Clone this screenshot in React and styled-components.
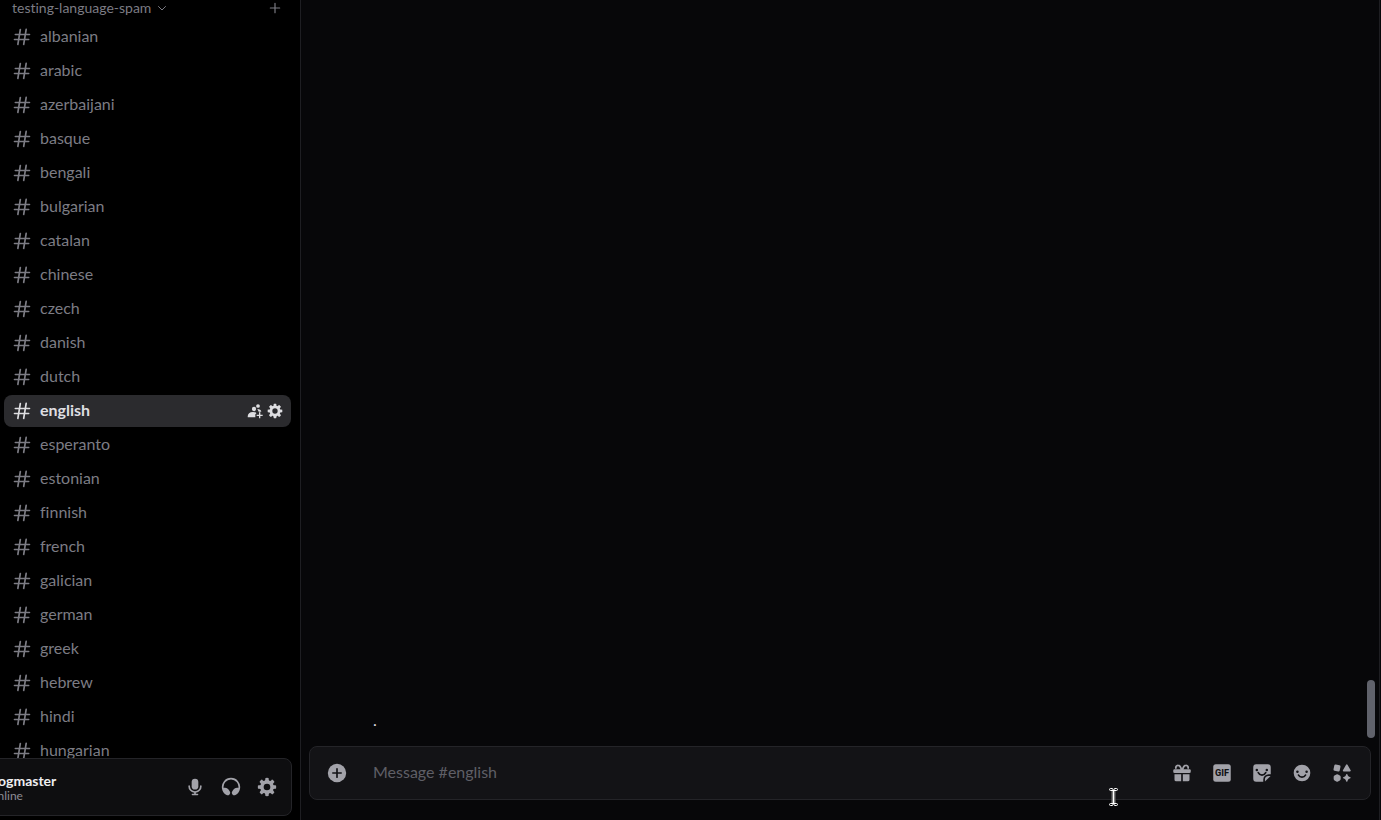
import React from "react"
import styled, { createGlobalStyle } from "styled-components"

const GlobalStyle = createGlobalStyle`
  * {
    box-sizing: border-box;
  }
  body {
    margin: 0;
    overflow: hidden;
    background: #070709;
    font-family: Lato, sans-serif;
    font-variant-ligatures: none;
  }
  button {
    display: flex;
    align-items: center;
    justify-content: center;
    padding: 0;
    border: 0;
    background: none;
    color: inherit;
    font: inherit;
  }
`

const Layout = styled.div`
  display: flex;
  height: 100vh;
  overflow: hidden;
`

const Sidebar = styled.nav`
  display: flex;
  flex-direction: column;
  flex: none;
  width: 301px;
  overflow: hidden;
  background: #000;
  border-right: 1px solid #1e1e22;
`

const Channels = styled.div`
  flex: 1;
  min-height: 0;
  overflow: hidden;
  color: #7c7c84;
`

const Category = styled.div`
  display: flex;
  align-items: center;
  justify-content: space-between;
  height: 16px;
  padding: 0 18px 0 12px;
  font-size: 14px;
  line-height: 16px;
`

const CategoryName = styled.button`
  && {
    gap: 5px;
    font-variant-ligatures: none;
  }
`

const List = styled.ul`
  display: flex;
  flex-direction: column;
  gap: 2px;
  margin: 5px 9px 0 4px;
  padding: 0;
  list-style: none;
`

const Row = styled.li`
  display: flex;
  align-items: center;
  gap: 4px;
  height: 32px;
  padding: 0 8px;
  border-radius: 8px;
  background: ${(props) => (props.$selected ? "#2b2b2e" : "none")};
  color: ${(props) => (props.$selected ? "#dedee1" : "inherit")};
`

const ChannelLink = styled.a`
  display: flex;
  flex: 1;
  align-items: center;
  gap: 8px;
  color: inherit;
  text-decoration: none;
`

const ChannelName = styled.span`
  padding-bottom: 2px;
  font-size: 16px;
  font-weight: ${(props) => (props.$selected ? 700 : 400)};
  line-height: 20px;
`

const UserPanel = styled.section`
  display: flex;
  flex: none;
  align-items: center;
  justify-content: space-between;
  height: 58px;
  margin: 0 8px 4px -64px;
  padding: 0 8px 0 51px;
  border: 1px solid #242428;
  border-radius: 8px;
  background: #0e0e10;
`

const UserText = styled.div`
  padding-top: 2px;
`

const UserName = styled.div`
  color: #efeff1;
  font-size: 14px;
  font-weight: 700;
  line-height: 16px;
`

const Status = styled.div`
  color: #8c8c94;
  font-size: 12px;
  line-height: 14px;
`

const PanelButtons = styled.div`
  display: flex;
  gap: 4px;
  color: #a2a2a9;
  button {
    width: 32px;
    height: 32px;
  }
`

const Chat = styled.main`
  display: flex;
  flex: 1;
  flex-direction: column;
  min-width: 0;
  margin-right: 1px;
  border-right: 1px solid #1e1e22;
`

const Messages = styled.div`
  display: flex;
  flex: 1;
  flex-direction: column;
  justify-content: flex-end;
  position: relative;
`

const Message = styled.p`
  margin: 0;
  padding: 0 72px 16px;
  color: #dedee1;
  font-size: 16px;
  line-height: 20px;
`

const Thumb = styled.div`
  position: absolute;
  right: 4px;
  bottom: 8px;
  width: 8px;
  height: 58px;
  border-radius: 4px;
  background: #60626b;
`

const Composer = styled.form`
  display: flex;
  flex: none;
  align-items: center;
  height: 54px;
  margin: 0 8px 20px;
  padding: 0 8px 0 7px;
  border: 1px solid #242428;
  border-radius: 8px;
  background: #131316;
  color: #a2a2a9;
  button {
    width: 40px;
    height: 40px;
  }
`

const Input = styled.input`
  flex: 1;
  min-width: 0;
  padding: 0 16px 2px;
  border: 0;
  outline: 0;
  background: none;
  color: #dedee1;
  font: 16px/20px Lato, sans-serif;
  &::placeholder {
    color: #5f5f66;
    opacity: 1;
  }
`

const Pointer = styled.svg`
  position: absolute;
  right: 260px;
  bottom: 13px;
  width: 15px;
  height: 20px;
`

const Icon = ({ size = 20, children }) => (
  <svg width={size} height={size} viewBox="0 0 24 24" fill="currentColor" aria-hidden="true">
    {children}
  </svg>
)

const HashIcon = () => (
  <Icon>
    <path
      fillRule="evenodd"
      d="M10.99 3.16A1 1 0 1 0 9 2.84L8.15 8H4a1 1 0 0 0 0 2h3.82l-.67 4H3a1 1 0 1 0 0 2h3.82l-.8 4.84a1 1 0 0 0 1.97.32L8.85 16h4.97l-.8 4.84a1 1 0 0 0 1.97.32l.86-5.16H20a1 1 0 1 0 0-2h-3.82l.67-4H21a1 1 0 1 0 0-2h-3.82l.8-4.84a1 1 0 1 0-1.97-.32L15.15 8h-4.97l.8-4.84ZM14.15 14l.67-4H9.85l-.67 4h4.97Z"
    />
  </Icon>
)

const GearIcon = ({ size }) => (
  <Icon size={size}>
    <path
      fillRule="evenodd"
      d="M10.56 1.1c-.46.05-.7.53-.64.98.18 1.16-.19 2.2-.98 2.53-.8.33-1.79-.15-2.49-1.1-.27-.36-.78-.52-1.14-.24-.77.59-1.45 1.27-2.04 2.04-.28.36-.12.87.24 1.14.96.7 1.43 1.7 1.1 2.49-.33.8-1.37 1.16-2.53.98-.45-.07-.93.18-.99.64a11.1 11.1 0 0 0 0 2.88c.06.46.54.7.99.64 1.16-.18 2.2.19 2.53.98.33.8-.14 1.79-1.1 2.49-.36.27-.52.78-.24 1.14.59.77 1.27 1.45 2.04 2.04.36.28.87.12 1.14-.24.7-.95 1.7-1.43 2.49-1.1.8.33 1.16 1.37.98 2.53-.07.45.18.93.64.99a11.1 11.1 0 0 0 2.88 0c.46-.06.7-.54.64-.99-.18-1.16.19-2.2.98-2.53.8-.33 1.79.14 2.49 1.1.27.36.78.52 1.14.24.77-.59 1.45-1.27 2.04-2.04.28-.36.12-.87-.24-1.14-.96-.7-1.43-1.7-1.1-2.49.33-.8 1.37-1.16 2.53-.98.45.07.93-.18.99-.64a11.1 11.1 0 0 0 0-2.88c-.06-.46-.54-.7-.99-.64-1.16.18-2.2-.19-2.53-.98-.33-.8.14-1.79 1.1-2.49.36-.27.52-.78.24-1.14a11.07 11.07 0 0 0-2.04-2.04c-.36-.28-.87-.12-1.14.24-.7.96-1.7 1.43-2.49 1.1-.8-.33-1.16-1.37-.98-2.53.07-.45-.18-.93-.64-.99a11.1 11.1 0 0 0-2.88 0ZM16 12a4 4 0 1 1-8 0 4 4 0 0 1 8 0Z"
    />
  </Icon>
)

const InviteIcon = () => (
  <Icon size={16}>
    <circle cx="10.500" cy="9" r="3.200" />
    <path d="M1 21c0-5 3-7.500 8-7.500 2.500 0 4 .6 5.200 1.700L12.500 17v4.500H2a1 1 0 0 1-1-.500Z" />
    <circle cx="16.500" cy="4.500" r="2.800" />
    <path d="M15.500 9c3.500.2 5.500 1.500 6 4h-4Z" />
    <path d="M18 14h2v3.500h3.500v2H20V23h-2v-3.500h-3.500v-2h3.500Z" />
  </Icon>
)

const MicIcon = () => (
  <Icon>
    <path d="M12 2a4 4 0 0 0-4 4v5a4 4 0 0 0 8 0V6a4 4 0 0 0-4-4Z" />
    <path d="M6 11a1 1 0 1 0-2 0 8 8 0 0 0 7 7.940V20H9a1 1 0 1 0 0 2h6a1 1 0 1 0 0-2h-2v-1.060A8 8 0 0 0 20 11a1 1 0 1 0-2 0 6 6 0 0 1-12 0Z" />
  </Icon>
)

const HeadphonesIcon = () => (
  <Icon>
    <path d="M12 3a9 9 0 0 0-8.950 10h1.870a5 5 0 0 1 4.100 2.130l1.370 1.970a3.100 3.100 0 0 1-.17 3.780 2.850 2.850 0 0 1-3.550.74 11 11 0 1 1 10.660 0c-1.270.71-2.730.23-3.550-.74a3.100 3.100 0 0 1-.17-3.780l1.380-1.970a5 5 0 0 1 4.100-2.130h1.860A9 9 0 0 0 12 3Z" />
  </Icon>
)

const PlusCircleIcon = () => (
  <Icon>
    <circle cx="12" cy="12" r="11" />
    <path d="M12 7v10M7 12h10" stroke="#131316" strokeWidth="2" strokeLinecap="round" />
  </Icon>
)

const GiftIcon = () => (
  <Icon>
    <path
      d="M11.500 8.500C10.500 4.500 9 2.800 7.300 2.800a2.600 2.600 0 0 0-2.300 4M12.500 8.500c1-4 2.500-5.700 4.200-5.700a2.600 2.600 0 0 1 2.300 4"
      fill="none"
      stroke="currentColor"
      strokeWidth="2.200"
    />
    <rect x="1.500" y="7.500" width="21" height="4.500" rx="1.500" />
    <path d="M3 13.500h8V22H5a2 2 0 0 1-2-2ZM13 13.500h8V20a2 2 0 0 1-2 2h-6Z" />
  </Icon>
)

const GifIcon = () => (
  <Icon>
    <rect x="1.500" y="1.500" width="21" height="21" rx="3" />
    <text x="12" y="16" textAnchor="middle" fill="#131316" fontFamily="Roboto, sans-serif" fontSize="11" fontWeight="800">
      GIF
    </text>
  </Icon>
)

const StickerIcon = () => (
  <Icon>
    <path d="M5 1.500h14A3.500 3.500 0 0 1 22.500 5v8.500H20a6.500 6.500 0 0 0-6.500 6.500v2.500H5A3.500 3.500 0 0 1 1.500 19V5A3.500 3.500 0 0 1 5 1.500Z" />
    <path d="M22.300 15.500 15.500 22.300V20a4.500 4.500 0 0 1 4.500-4.500Z" />
    <circle cx="5.800" cy="8.500" r="1.500" fill="#131316" />
    <circle cx="17.800" cy="8.500" r="1.500" fill="#131316" />
    <path d="M7.500 11.500c2 4 7 4 9 0" fill="none" stroke="#131316" strokeWidth="2" strokeLinecap="round" />
  </Icon>
)

const SmileIcon = () => (
  <Icon>
    <circle cx="12" cy="12" r="10" />
    <circle cx="6.500" cy="10.500" r="1.500" fill="#131316" />
    <circle cx="17.500" cy="10.500" r="1.500" fill="#131316" />
    <path d="M7.800 14.500c1.800 3.200 6.600 3.200 8.400 0" fill="none" stroke="#131316" strokeWidth="2" strokeLinecap="round" />
  </Icon>
)

const AppsIcon = () => (
  <Icon>
    <rect x="2.200" y="2.200" width="7.600" height="7.600" rx="1.500" transform="rotate(12 6 6)" />
    <path d="M16.900 2.200a1 1 0 0 1 1.700 0l3.800 6.500a1 1 0 0 1-.9 1.500H14a1 1 0 0 1-.9-1.500Z" />
    <path d="M5.200 13.700a2 2 0 0 1 2 0l2.200 1.300a2 2 0 0 1 1 1.700v2.500a2 2 0 0 1-1 1.700l-2.200 1.300a2 2 0 0 1-2 0L3 20.900a2 2 0 0 1-1-1.700v-2.500A2 2 0 0 1 3 15Z" />
    <path d="M18.400 13.500c.8 2.200 1.400 2.900 3.600 3.700a.7.7 0 0 1 0 1.200c-2.200.8-2.800 1.500-3.600 3.700a.7.7 0 0 1-1.300 0c-.8-2.200-1.400-2.900-3.600-3.700a.7.7 0 0 1 0-1.200c2.200-.8 2.800-1.500 3.600-3.700a.7.7 0 0 1 1.300 0Z" />
  </Icon>
)

const channels = [
  "albanian",
  "arabic",
  "azerbaijani",
  "basque",
  "bengali",
  "bulgarian",
  "catalan",
  "chinese",
  "czech",
  "danish",
  "dutch",
  "english",
  "esperanto",
  "estonian",
  "finnish",
  "french",
  "galician",
  "german",
  "greek",
  "hebrew",
  "hindi",
  "hungarian",
]

const Channel = ({ name, selected }) => (
  <Row $selected={selected}>
    <ChannelLink href={`#${name}`}>
      <HashIcon />
      <ChannelName $selected={selected}>{name}</ChannelName>
    </ChannelLink>
    {selected && (
      <>
        <button aria-label="Create Invite">
          <InviteIcon />
        </button>
        <button aria-label="Edit Channel">
          <GearIcon size={16} />
        </button>
      </>
    )}
  </Row>
)

const App = () => {
  return (
    <Layout>
      <GlobalStyle />
      <Sidebar>
        <Channels>
          <Category>
            <CategoryName>
              testing-language-spam
              <Icon size={12}>
                <path d="m5 9 7 7 7-7" fill="none" stroke="currentColor" strokeWidth="2" strokeLinecap="round" />
              </Icon>
            </CategoryName>
            <button aria-label="Create Channel">
              <Icon size={14}>
                <path d="M12 4v16M4 12h16" fill="none" stroke="currentColor" strokeWidth="2" strokeLinecap="round" />
              </Icon>
            </button>
          </Category>
          <List>
            {channels.map((name) => (
              <Channel key={name} name={name} selected={name === "english"} />
            ))}
          </List>
        </Channels>
        <UserPanel>
          <UserText>
            <UserName>frogmaster</UserName>
            <Status>Online</Status>
          </UserText>
          <PanelButtons>
            <button aria-label="Mute">
              <MicIcon />
            </button>
            <button aria-label="Deafen">
              <HeadphonesIcon />
            </button>
            <button aria-label="User Settings">
              <GearIcon />
            </button>
          </PanelButtons>
        </UserPanel>
      </Sidebar>
      <Chat>
        <Messages>
          <Message>.</Message>
          <Thumb />
        </Messages>
        <Composer>
          <button type="button" aria-label="Add attachment">
            <PlusCircleIcon />
          </button>
          <Input aria-label="Message #english" placeholder="Message #english" />
          <button type="button" aria-label="Send a gift">
            <GiftIcon />
          </button>
          <button type="button" aria-label="Open GIF picker">
            <GifIcon />
          </button>
          <button type="button" aria-label="Open sticker picker">
            <StickerIcon />
          </button>
          <button type="button" aria-label="Select emoji">
            <SmileIcon />
          </button>
          <button type="button" aria-label="Apps">
            <AppsIcon />
          </button>
        </Composer>
      </Chat>
      <Pointer viewBox="0 0 15 20" fill="none" aria-hidden="true">
        <path d="M7.500 3v14" stroke="#fff" strokeWidth="4" />
        <rect x="3.500" y="1.500" width="3.500" height="2" rx="1" stroke="#fff" />
        <rect x="8" y="1.500" width="3.500" height="2" rx="1" stroke="#fff" />
        <rect x="3.500" y="16.500" width="3.500" height="2" rx="1" stroke="#fff" />
        <rect x="8" y="16.500" width="3.500" height="2" rx="1" stroke="#fff" />
        <path d="M6 4v12M9 4v12" stroke="#000" />
      </Pointer>
    </Layout>
  )
}

export default App
